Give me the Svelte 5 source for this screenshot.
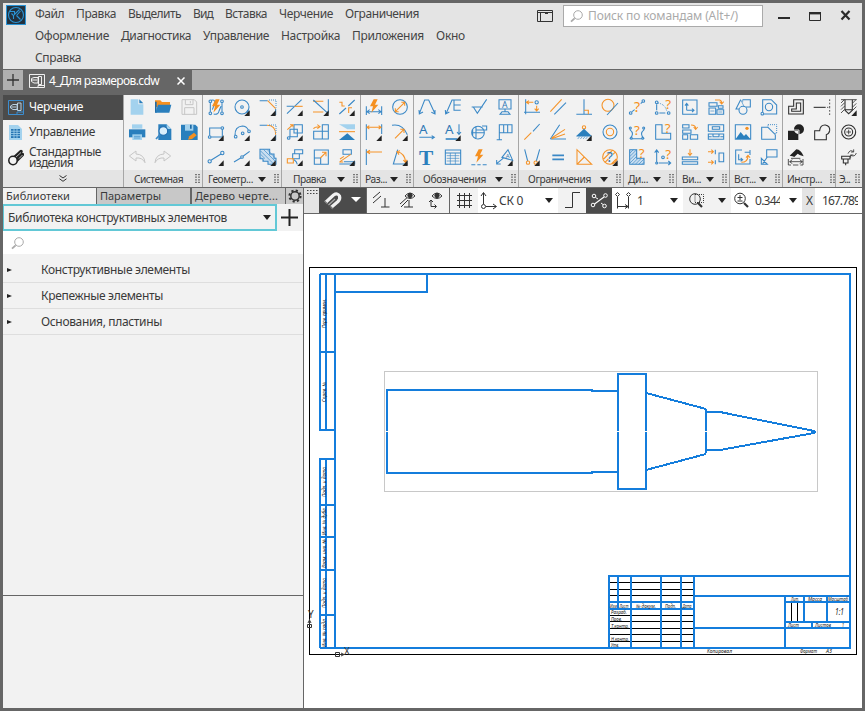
<script>
  // Stretches or tightens letter spacing so a label takes up the given width.
  function fit(node, width) {
    const natural = node.getBoundingClientRect().width;
    const count = node.textContent.length;
    if (width && count > 1) node.style.letterSpacing = (width - natural) / count + 'px';
  }

  const menu = [
    [['Файл', 29], ['Правка', 40], ['Выделить', 53], ['Вид', 20], ['Вставка', 42], ['Черчение', 54], ['Ограничения', 74]],
    [['Оформление', 74], ['Диагностика', 70], ['Управление', 66], ['Настройка', 59], ['Приложения', 72], ['Окно', 29]],
    [['Справка', 46]]
  ];

  // Icon notation: parts split by "|", each "class:path"; @x,y,r; is a circle,
  // "t class x y size char" is a letter, "^" is the corner flag.
  const bolt = 'fo:M38 13L27 34H36L31 53L52 29H42L50 13Z';
  const groups = [
    { name: 'Системная', w: 49, cols: 3, full: 78, pad: 10, icons: [
      'fl:M20 13H43V28H58V59H20Z|f:M46 13L58 25H46Z',
      'fo:M15 16H31L36 21H60V36H15Z|fd:M15 20H20V53H15Z|f:M16 53L24 29H64L58 53Z',
      'g:M18 14H55L62 21V58H18ZM28 14V29H51V14M26 58V38H54V58M43 18V25',
      'fl:M24 13H55V26H24Z|f:M15 28H64V52H15Z|fl:M25 43H54V60H25Z|b1:M30 49H49M30 54H49',
      'f:M25 13H50L64 27V60H25Z|fl:M50 13V27H64Z|w:@40,33,13;|b2:M31 43L18 57',
      'f:M15 14H58L65 21V60H15Z|fl:M27 14H52V32H27Z|fd:M42 14H47V26H42Z|fo:M36 59L40 49L54 38L62 46L48 57Z',
      'g:M36 18L16 33L36 48V39Q55 37 63 53Q61 28 36 27Z',
      'g:M42 18L62 33L42 48V39Q23 37 15 53Q17 28 42 27Z', ''] },
    { name: 'Геометр...', w: 45, cols: 3, full: 78, pad: 5, arrow: 1, icons: [
      'b:M22 23V50M25 16Q36 12 36 24L28 44M32 57Q46 60 48 48L54 34M57 24V50@22,19,4;@57,19,4;@22,55,4;@57,55,4;|' + bolt,
      'b:@39,36,21;|b:@39,36,4;|b:@57,50,3;|^',
      'b:M14 17H38M62 42V60|o:M38 17L62 41|d:M42 15H63V38|^',
      'b:M25 24H53M58 29V51H25M20 46V24H25@20,51,4;@58,24,4;|^',
      'b:M18 46Q17 20 40 18Q52 18 58 30@20,50,4;@41,40,4;@60,34,4;|^',
      'b:M14 16H36M62 44V60|o:M36 16Q62 16 62 44|d:M42 15H63V38|^',
      'b:M25 45L54 27@20,49,5;@58,24,5;|^',
      'b:M15 51L35 39M43 33L62 19@39,36,4;|^',
      'h:M15 13H44V27H57V40H63V58H39V49H24V41H15Z|b1:M17 18L56 57M17 28L30 41M26 14L62 50M37 14L60 38M25 46L27 48M17 37L20 40|^'] },
    { name: 'Правка', w: 33, cols: 3, full: 78, pad: 11, arrow: 1, icons: [
      'b:M15 56L59 14M14 34H35|o:M37 34H62|^',
      'o:M15 19H46M15 51H46|b:M16 15L60 55M61 13V55|^',
      'b:M16 57L36 39M43 33L62 15|o:M16 22H24V33L32 33M54 38H44V54|^',
      'b:M36 14H61V39H36ZM24 28H46V50H24Z@20,54,4;|o:M16 29L33 14M24 14H33V22|^',
      'b:M43 14H61V34H43ZM43 34H61V57H43ZM17 34H43V57H17Z|o:M17 27Q18 20 34 20M28 14L36 20L28 26',
      'fl:M15 13H63V28H40Z|o:M15 35H63|f:M15 60L40 40L63 60Z',
      'b:M38 14H62V26H38ZM32 26H52V41H32Z|o:M16 41H34V54H16Z|b:M36 44Q44 48 46 58|^',
      'b:M19 15H61V58H19ZM19 39H38V58|o:M37 39L53 23M42 22H54V34',
      'b:M27 14H52V28H27ZM16 57H62V50H30|o:M18 50L50 28M30 34L18 42M16 51H28|^'] },
    { name: 'Раз...', w: 22, cols: 2, full: 52, pad: 4, arrow: 1, icons: [
      'b:M16 34V60M62 34V60M18 50H60M26 44L18 50L26 56M52 44L60 50L52 56|' + bolt,
      'b:@39,36,22;|o:M25 50L53 22M25 40V50H35M43 22H53V32',
      'b:M16 13V60M62 13V42|o:M18 22H60M25 17L18 22L25 27M53 17L60 22L53 27|^',
      'b:M15 16Q46 10 61 44|o:M24 55L50 29M40 28H51V39|^',
      'b:M16 13V60|o:M18 21H63M27 16L18 21L27 26',
      'b:M32 14L19 57H62|o:M30 20Q54 24 56 52M39 17L30 20L36 29M49 45L56 53L60 44|^'] },
    { name: 'Обозначения', w: 63, cols: 4, full: 104, pad: 9, arrow: 1, icons: [
      'b:M16 56L32 15H44L63 56M15 45L16 57L27 51M52 52L63 57V45',
      'b:M18 56L36 15H63M42 15V46H62M42 30H62M16 45L17 57L28 51',
      'b:M17 36H50M22 36L34 55L62 13',
      'b:M21 14H57V42H21ZM39 42V50M24 58L30 50H48L54 58Z|t b 30 38 26 A',
      't b 15 43 40 A|b:M16 52H61M53 47L61 52L53 57',
      't b 15 43 40 A|b:M57 13V43M51 36L57 43L63 36|b2:M17 57H52|^',
      'b:@36,38,19;M16 38H55M30 20V57M30 30H62V18H48M20 28V48',
      'b:M22 60V14H60V38H22M35 14V38M47 14V38M14 59H30',
      't s 15 60 64 T',
      'b:M16 15H62V58H16ZM16 24H62|b1:M20 32H58M20 40H58M20 48H58M31 24V58M46 24V58',
      bolt + '|b:M16 59H28M34 59H44M50 59H62',
      'b:M14 56L36 38M14 45V57H26M30 37L48 14L62 46Z|t b 41 39 18 A|^'] },
    { name: 'Ограничения', w: 63, cols: 4, full: 104, pad: 9, arrow: 1, icons: [
      'b:M20 13V58M15 52H63@53,22,5;|o:M22 22H43M30 17L22 22L30 27M53 32V48M47 41L53 48L59 41',
      'o:M16 50L50 13|b:M28 58L63 23',
      'b:M39 13V58M16 58H63|o:M39 46H52V58',
      'o:@33,31,18;|b:M30 60L63 24',
      'o:M16 59L37 38|b:M42 34L62 12',
      'b:M16 57L44 14M16 57H63|o:M20 56L60 42M20 54L60 28',
      'o:@39,22,5;|f:M39 26L62 48H16Z|b1:M16 49H62M20 57L26 50M28 57L34 50M36 57L42 50M44 57L50 50|^',
      'b:@39,36,21;|o:@39,36,11;',
      'b:M17 13L26 48M62 13L52 48|o:@27,53,5;@50,53,5;|^',
      'b2:M22 31H57M22 43H57',
      'o:M18 14V58H62ZM18 58L40 36',
      'o:@39,36,22;M20 42L46 16M24 52L34 42M44 56L58 42M48 28L54 22|t b 29 51 42 ?|^'] },
    { name: 'Ди...', w: 20, cols: 2, full: 52, pad: 4, arrow: 1, icons: [
      'b:@20,54,4;@58,18,4;M24 50L32 44M50 26L54 22|t o 30 50 42 ?',
      'b:@20,22,4;@20,54,4;@56,54,4;|d:M24 24Q46 28 50 48|b:M20 28V46M28 54H46|t o 46 42 40 ?',
      'b:M17 28Q34 42 17 56M61 28Q44 42 61 56M22 56H56@19,24,3;@59,24,3;@22,55,3;@56,55,3;|t o 30 44 40 ?',
      'b:M17 14H36V40H62V58H17Z|t o 44 40 40 ?',
      'h:M17 14H38V40H60V58H17Z|b1:M18 24L28 14M18 34L38 14M18 44L38 24M18 54L38 34M24 58L42 40M34 58L52 40M44 58L60 42M54 58L60 52|t o 44 40 40 ?',
      'b:M20 50V16M14 23L20 15L26 23M26 54H62M55 48L62 54L55 60@39,37,4;@20,54,3;|t o 46 42 40 ?'] },
    { name: 'Ви...', w: 19, cols: 2, full: 52, pad: 5, arrow: 1, icons: [
      'b:M17 15H60V58H17ZM29 46V26M24 32L29 25L34 32M29 46H50M45 41L51 46L45 51',
      'b:M18 23H42V34H18ZM46 32H60V40H46ZM18 39H38V58H18ZM42 44H62V58H42Z|b1:M22 48H34M46 51H58|o:M36 15H50Q56 16 56 25M50 20L56 27L62 20',
      'b:M17 14H36V24H17ZM17 30H42V40H17ZM17 44H32V58H17ZM40 44H62V58H40Z|o:M42 15Q56 15 56 26M50 21L56 28L62 21',
      'b:M16 14H62V34H16ZM28 20H50V28H28ZM16 42H62V58H16ZM16 50H26M52 50H62M30 42V50H48V42',
      'o:M39 13V30M33 24L39 31L45 24|b:M16 36H62V44H16ZM16 50H62V58H16Z',
      'o:M15 20H31M25 14L31 20L25 26M15 52H31M25 46L31 52L25 58|b:M37 14V28M37 46V58M48 24H62V50H48Z'] },
    { name: 'Вст...', w: 22, cols: 2, full: 52, pad: 4, arrow: 1, icons: [
      'b:M38 14H61V36H46M32 14L18 42H28@39,46,12;|b1:M32 14L42 34M38 14V22',
      'b:M20 52V14H46L62 30V57H24@39,36,11;@19,56,4;',
      'b:M16 14H62V58H16Z|f:M17 57L32 36L42 48L48 42L61 57Z|fo:@51,25,5;',
      'b:M36 22H17V58H58V44M36 22L58 44|d:M36 14H62V40M36 14V22M58 40H62',
      'b:M36 15H17V57H60V42M26 28V44H38M44 22H60M60 15V30M32 39L38 44L32 49|o:M34 52Q54 52 54 32M48 38L54 31L60 38',
      'b:M32 14H63V36H32ZM34 36L20 56M16 40V58H34ZM16 40L34 58'] },
    { name: 'Инстр...', w: 35, cols: 2, full: 52, pad: 4, icons: [
      'k:M32 14H61V57H17V34H32ZM40 24H53V49H26V42H40Z',
      'k:M14 37H50|k1:M54 37H58M62 13V18M62 23V28M62 33V40M62 45V50M62 55V60',
      'fk:@48,28,15;M15 32H46V60H15Z|w1:M33 30H48V44',
      'k:M17 32H32Q34 14 49 15Q64 18 62 32Q60 42 52 44V59H17Z',
      'fk:M20 32L40 13Q54 14 62 34L50 30L44 26L34 36L28 34Z|k1:M16 42V60H24M60 42V60H52M30 60H46M20 50H58M28 44L20 50L28 56M50 44L58 50L50 56M24 40H52', ''] },
    { name: 'Э...', w: 11, cols: 1, full: 26, pad: 3, icons: [
      'k:M27 14V46L38 56L49 46V14M27 44H49|k1:M15 14H62M15 24L25 14M15 34L26 23M15 44L26 33M15 54L26 43M50 24L60 14M50 36L61 25M50 46L61 35|^',
      'k:@38,36,21;@38,36,12;|k1:M31 36H45M38 29V43',
      'k:M17 34H42V42H17ZM22 42V54H36V42M29 54V61|k1:M36 26Q42 12 52 20M45 21H53V13M61 24Q56 38 44 30M44 38V30H52'] }
  ];

  const parse = (src) => src.split('|').filter(Boolean).map((part) => {
    if (part === '^') return { cls: 'flag', d: 'M62 46V63H46Z' };
    if (part.startsWith('t ')) {
      const [, cls, x, y, size, ch] = part.split(' ');
      return { text: ch, cls, x, y, size };
    }
    const i = part.indexOf(':');
    const d = part.slice(i + 1).replace(/@(\d+),(\d+),(\d+);/g, (_, x, y, r) =>
      `M${+x - +r} ${y}a${r} ${r} 0 1 0 ${2 * r} 0a${r} ${r} 0 1 0 ${-2 * r} 0`);
    return { cls: part.slice(0, i), d };
  });

  const tree = [['Конструктивные элементы', 149], ['Крепежные элементы', 122], ['Основания, пластины', 121]];
  // Title block labels: x, baseline, text, width.
  const stamp = [
    [610, 608, 'Изм', 7], [619.5, 608, 'Лист', 9], [636, 608, '№ докум.', 20], [665, 608, 'Подп.', 11], [682.5, 608, 'Дата', 9],
    [611, 614, 'Разраб.', 16], [611, 621, 'Пров.', 11], [611, 627.5, 'Т.контр.', 18], [611, 640.5, 'Н.контр.', 18], [611, 647, 'Утв.', 8],
    [791, 601, 'Лит.', 8], [808, 601, 'Масса', 14], [828, 601, 'Масштаб', 20], [788, 627, 'Лист', 11], [815, 627, 'Листов', 16], [842, 627, '1', 2],
    [707, 653, 'Копировал', 25], [800, 653, 'Формат', 17], [826, 653, 'А3', 6]
  ];
  const side = [[328, 'Перв. примен.', 29], [402, 'Справ. №', 20], [497, 'Подп. и дата', 30], [535, 'Инв. № дубл.', 28], [568, 'Взам. инв. №', 29], [608, 'Подп. и дата', 30], [647, 'Инв. № подл.', 29]];
</script>

{#snippet sprite(src)}
  <svg class="ic" viewBox="0 0 78 75">
    {#each parse(src) as p}
      {#if p.text}
        <text class={'t' + p.cls} x={p.x} y={p.y} font-size={p.size}>{p.text}</text>
      {:else}
        <path class={p.cls} d={p.d} />
      {/if}
    {/each}
  </svg>
{/snippet}

{#snippet lens(cls)}
  <svg class={cls} width="14" height="14" viewBox="0 0 14 14"><path d="M4.6 9.3L1 12.7" stroke-width="1.8" /><circle cx="8" cy="6" r="4.3" /></svg>
{/snippet}

<div class="app">
  <header>
    <svg class="logo" width="20" height="20" viewBox="0 0 20 20"><rect width="20" height="20" fill="#22303c" /><rect x=".5" y=".5" width="19" height="19" class="ln" /><circle cx="10" cy="10" r="7.5" class="ln" /><path class="ln" d="M4 6.500H8.500V9.500L13.500 4.500M7.500 14V10.500L5.500 8.500M10.500 10.500L14.500 14.500M14.500 6L10.500 10.500" /></svg>
    <nav>
      {#each menu as row}
        <div class="mrow">{#each row as [label, w]}<span class="mi" style:width="{w}px"><span use:fit={w}>{label}</span></span>{/each}</div>
      {/each}
    </nav>
    <div class="wintools">
      <svg width="16" height="12" viewBox="0 0 16 12" fill="none" stroke="#333"><path d="M.5 .5H15.5V11.5H.5ZM.5 2.5H15.5M3.5 2.5V11.5M8 3.5H11" /></svg>
      <div class="search">{@render lens('lens')}<span use:fit={150}>Поиск по командам (Alt+/)</span></div>
      <svg class="wb" width="76" height="14" viewBox="0 0 76 14" fill="none" stroke="#2b2b2b"><path d="M0 9H12" stroke-width="2" /><path d="M31.500 4V11.500H42.500V4" /><path d="M31 4.200H43" stroke-width="2.400" /><path d="M63.500 2L71.500 10.500M71.500 2L63.500 10.500" stroke-width="2.200" /></svg>
    </div>
  </header>

  <div class="doctabs">
    <div class="plus"><svg width="12" height="12" viewBox="0 0 12 12"><path d="M6 0V12M0 6H12" stroke="#333" stroke-width="1.3" /></svg></div>
    <div class="doc">
      <svg width="16" height="14" viewBox="0 0 16 14" fill="none" stroke="#fff"><path d="M.5 .5H15.500V13.500H.5ZM2.500 4.500L5 3.500H9V9H5L2.500 7.500ZM9.500 2.500H12.500V10.500H9.500ZM9 13V11.500H15M2 6H8" stroke-width=".9" /></svg>
      <span class="dt"><span use:fit={110}>4_Для размеров.cdw</span></span>
      <svg width="8" height="8" viewBox="0 0 8 8"><path d="M.5 .5L7.500 7.500M7.500 .5L.5 7.500" stroke="#fff" stroke-width="1.5" /></svg>
    </div>
  </div>

  <section class="ribbon">
    <div class="modes">
      <div class="mode on"><svg width="16" height="15" viewBox="0 0 16 15" fill="none" stroke="#3b8dd0"><path d="M.5 .5H15.500V14.500H.5ZM9 14V12H15" /><path d="M2.500 6L5 4.500H9V9.500H5L2.500 8ZM9.500 3H13V10.500H9.500ZM2 7H8" stroke="#b9cfe0" /></svg><span use:fit={54}>Черчение</span></div>
      <div class="mode"><svg width="16" height="15" viewBox="0 0 16 15"><path d="M1 0H10L14 4V15H1Z" fill="#a3d2ee" /><path d="M3 4H12V13H3Z" fill="#2676b4" /><path d="M3 6.200H12M3 8.500H12M3 10.700H12M6 4V13M9 4V13" stroke="#a3d2ee" stroke-width=".8" /></svg><span use:fit={66}>Управление</span></div>
      <div class="mode"><svg width="16" height="17" viewBox="0 0 16 17"><path d="M7 8L13 2.500M9 11L14.500 5.500" stroke="#222" stroke-width="3.400" stroke-linecap="round" /><path d="M8 8L13 3.500M11 9.500L14.500 6" stroke="#bbb" stroke-width="1" /><circle cx="5" cy="11.500" r="4.200" fill="#f4f4f4" stroke="#222" stroke-width="1.500" /></svg><span class="two"><span use:fit={72}>Стандартные</span><span use:fit={44}>изделия</span></span></div>
      <div class="more"><svg width="8" height="7" viewBox="0 0 8 7" fill="none" stroke="#333"><path d="M.5 .5L4 3L7.500 .5M.5 3.800L4 6.300L7.500 3.800" /></svg></div>
    </div>
    {#each groups as g}
      <div class="group" style:width="{g.full}px">
        <div class="cells">{#each g.icons as icon}{@render sprite(icon)}{/each}</div>
        <div class="cap" style:padding-left="{g.pad}px">
          <span use:fit={g.w}>{g.name}</span>
          <i class="sp"></i>
          {#if g.arrow}<b class="tri"></b>{/if}
          <svg class="grip" class:tight={g.cols === 1} width="5" height="9" viewBox="0 0 5 9"><path d="M1 0V9M4 0V9" stroke="#333" stroke-width="1.200" stroke-dasharray="1.200 1.400" /></svg>
        </div>
      </div>
    {/each}
  </section>

  <main>
    <aside>
      <div class="ptabs">
        <div class="pt on"><span use:fit={64}>Библиотеки</span></div>
        <div class="pt"><span use:fit={61}>Параметры</span></div>
        <div class="pt"><span use:fit={83}>Дерево черте...</span></div>
        <div class="gear"><svg width="14" height="14" viewBox="0 0 14 14" fill="none" stroke="#333"><circle cx="7" cy="7" r="4.200" stroke-width="1.500" /><circle cx="7" cy="7" r="5.600" stroke-width="2" stroke-dasharray="2.200 2.200" /></svg></div>
      </div>
      <div class="lib">
        <div class="combo"><span use:fit={219}>Библиотека конструктивных элементов</span><b class="tri"></b></div>
        <svg width="17" height="17" viewBox="0 0 17 17"><path d="M8.500 0V17M0 8.500H17" stroke="#222" stroke-width="2" /></svg>
      </div>
      <div class="find">{@render lens('lens')}</div>
      <div class="tree">
        {#each tree as [label, w]}
          <div class="node"><b></b><span use:fit={w}>{label}</span></div>
        {/each}
      </div>
      <div class="low"></div>
    </aside>

    <section class="view">
      <div class="bar">
        <div class="c gr" style:width="15px"><svg width="11" height="6" viewBox="0 0 11 6"><path d="M0 1.500H11M0 4.500H11" stroke="#444" stroke-dasharray="1.500 1.500" /></svg></div>
        <div class="c dk" style:width="47px"><svg width="47" height="25" viewBox="0 0 47 25" fill="none"><path d="M6.500 14.500L14.500 7Q18.500 4.500 20.500 8Q21.500 11 19 13.500L12 19.500" stroke="#f2f2f2" stroke-width="3.200" /><path d="M9.500 17L16 11" stroke="#aaa" stroke-width="1.200" /><path d="M5.500 13L8.500 16M11 18L14 21" stroke="#777" stroke-width="1.200" /><path d="M32 9H42L37 14Z" fill="#fff" /></svg></div>
        <div class="c edge" style:width="84px"><svg width="82" height="25" viewBox="0 0 82 25" class="line"><path d="M6 10L13 4M6 15L14 8M18 10V19M14 19H22.500" /><path d="M33 16L43 7M34 19L41 12M42 12V19M37 19H46" /><path d="M38 8Q43 2 48 8Q43 13 38 8Z" fill="#fff" /><circle cx="43" cy="7.500" r="2.200" fill="#333" /><path d="M65 8Q70 2 75 8Q70 13 65 8Z" fill="#fff" /><circle cx="70" cy="7.500" r="2.200" fill="#333" /><path d="M64 12V18.500H69M62 14L64 12L66 14M67.500 16.500L69.500 18.500L67.500 20.500" /></svg></div>
        <div class="c" style:width="28px"><svg width="28" height="25" viewBox="0 0 28 25" class="line"><path d="M9.500 5V20M14.500 5V20M19.500 5V20M7 7.500H22M7 12.500H22M7 17.500H22" /></svg></div>
        <div class="c wh" style:width="80px"><svg width="21" height="25" viewBox="0 0 21 25" class="line"><path d="M5.500 16V5M3 8L5.500 4.500L8 8M8 18.500H18M15 16L18.500 18.500L15 21" /><circle cx="5.500" cy="18.500" r="2" /></svg><span use:fit={24}>СК 0</span><i class="sp"></i><b class="tri"></b></div>
        <div class="c" style:width="28px"><svg width="28" height="25" viewBox="0 0 28 25" class="line"><path d="M7 19.500H14.500V4.500H22" /></svg></div>
        <div class="c dk" style:width="26px"><svg width="26" height="25" viewBox="0 0 26 25" fill="none" stroke="#fff"><path d="M8.500 16L18 9" stroke-width="1.200" /><path d="M9.500 9.500L12 11M15 15L17 16.500" /><circle cx="8" cy="8" r="1.800" /><circle cx="19.500" cy="7.500" r="1.800" /><circle cx="7" cy="17" r="1.800" /><circle cx="18.500" cy="18" r="1.800" /></svg></div>
        <div class="c wh" style:width="71px"><svg width="25" height="25" viewBox="0 0 25 25" class="line"><path d="M5.500 9V20.500M16.500 9V20.500M6 18.500H16M13 16.500L16 18.500L13 20.500" /><path d="M5.500 4.500L7.500 6.500L5.500 8.500L3.500 6.500ZM16.500 4.500L18.500 6.500L16.500 8.500L14.500 6.500Z" /></svg><span>1</span><i class="sp"></i><b class="tri"></b></div>
        <div class="c" style:width="48px"><svg width="26" height="25" viewBox="0 0 26 25" class="line"><circle cx="12" cy="11" r="5.300" /><path d="M15 15L19 19" stroke-width="2.200" /><path d="M12 6.500H20.500V14.500H12Z" stroke-dasharray="1 1" /></svg><i class="sp"></i><b class="tri"></b></div>
        <div class="c wh" style:width="71px"><svg width="24" height="25" viewBox="0 0 24 25" class="line"><circle cx="9" cy="10.500" r="5.300" /><path d="M13 15L17 19" stroke-width="2.200" /><path d="M6.500 9.500H11.500M9 7V12M6.500 13H11.500" /></svg><span class="clip" style:width="25px"><span use:fit={27}>0.344</span></span><i class="sp"></i><b class="tri"></b></div>
        <div class="c gr x" style:width="13px">X</div>
        <div class="c wh" style:width="46px"><span class="clip last" style:width="36px"><span use:fit={38}>167.789</span></span></div>
      </div>

      <svg class="sheet" width="558" height="494" viewBox="304 214 558 494">
        <g class="thin"><rect x="309.500" y="267.500" width="547" height="387" /><rect x="384.500" y="371.500" width="433" height="120" stroke="#c8c8c8" />
          <path d="M609 582.500H694M609 589.500H694M609 595.500H694M609 615.500H694M609 621.500H694M609 628.500H694M609 634.500H694M609 641.500H694M791.500 602V622M797.500 602V622" />
        </g>
        <path class="blue" d="M320 274H850V648H320M335 274V648M320 274V430H335M326 274V430M320 352H335M320 648V459H335M326 459V648M320 505H335M320 537H335M320 570H335M320 615H335M335 292H427V274" />
        <path class="blue" d="M609 648V576H850M618 576V609M631 576V648M661 576V648M681 576V648M694 576V648M609 602H694M609 609H694M694 596H850M694 628H850M785 596V648M804 596V622M827 596V622M785 602H850M785 622H850M812 622V628" />
        <path class="blue" d="M618 391H592V390H387V473H592V472H618M618 374H646V489H618ZM706 409V453" />
        <path class="blue" d="M646 393L706 409M646 470L706 454M706 412H720L814 431Q817 432 814 433L720 450H706" />
        <path d="M386 431.500H388M617 431.500H619M645 431.500H647M705 431.500H707" stroke="#fff" />
        <g class="gost">
          {#each stamp as [x, y, s, w]}<text {x} {y} textLength={w} lengthAdjust="spacingAndGlyphs">{s}</text>{/each}
          {#each side as [y, s, w]}<text transform="translate(325.500 {y}) rotate(-90)" textLength={w} lengthAdjust="spacingAndGlyphs">{s}</text>{/each}
          <text x="835" y="615" font-size="8" textLength="9" lengthAdjust="spacingAndGlyphs">1:1</text>
        </g>
        <g class="axis"><text x="308" y="618">Y</text><text x="344" y="654.500">X</text><path d="M309.500 619V625M307.500 624.500H311.500V627.500H307.500ZM308 623L309.500 620L311 623M335.500 652.500V656.500H339.500V652.500ZM339 654.500H345M341 653L344 654.500L341 656" /></g>
      </svg>
    </section>
  </main>
</div>

<style>
  :global(body) { margin: 0; }
  .app { box-sizing: border-box; width: 865px; height: 711px; border: 3px solid #666; background: #666; font: 12px/16px "Noto Sans", "Open Sans", sans-serif; color: #3a3a3a; overflow: hidden; display: flex; flex-direction: column; }
  .app :global(span) { white-space: pre; }
  svg { display: block; flex: none; }
  .sp { flex: 1; }
  .ln { fill: none; stroke: #2a93d5; stroke-width: 1.1; }
  header { box-sizing: border-box; height: 67px; background: #e4e4e4; display: flex; flex: none; position: relative; border-bottom: 1px solid #666; }
  .logo { margin: 2px 0 0 3px; }
  nav { margin-left: 9px; flex: 1; }
  .mrow { display: flex; gap: 12px; height: 22px; align-items: center; color: #444; }
  .mi { display: block; }
  .mi > span { display: inline-block; }
  .wintools { position: absolute; top: 2px; left: 534px; display: flex; align-items: center; height: 22px; }
  .search { box-sizing: border-box; width: 200px; height: 22px; border: 1px solid #aaa; background: #fff; margin-left: 10px; display: flex; align-items: center; gap: 4px; padding-left: 6px; color: #aaa; }
  .lens { fill: none; stroke: #aaa; }
  .wb { margin-left: 15px; }
  .doctabs { height: 20px; background: #b0b0b0; display: flex; flex: none; margin-bottom: 5px; }
  .plus { width: 20px; display: flex; align-items: center; justify-content: center; background: #b0b0b0; }
  .doc { width: 169px; background: #666; display: flex; align-items: center; color: #fff; padding-left: 6px; box-sizing: border-box; height: 22px; }
  .dt { width: 128px; margin-left: 4px; }
  .dt > span { display: inline-block; }
  .ribbon { display: flex; height: 92px; flex: none; background: #a6a6a6; gap: 1px; }
  .modes { width: 120px; background: #f2f2f2; }
  .mode { box-sizing: border-box; height: 25px; display: flex; align-items: center; gap: 5px; padding: 0 0 1px 5px; }
  .mode.on { background: #4b4b4b; color: #fff; }
  .two { line-height: 11px; display: flex; flex-direction: column; align-items: flex-start; }
  .more { height: 17px; background: #e4e4e4; display: flex; align-items: center; justify-content: center; }
  .group { flex: none; background: #f2f2f2; }
  .cells { display: flex; flex-wrap: wrap; height: 75px; }
  .ic { width: 26px; height: 25px; overflow: visible; }
  .cap { height: 17px; background: #e4e4e4; display: flex; align-items: center; box-sizing: border-box; padding-right: 2px; padding-top: 1px; font-size: 10.200px; }
  .grip { margin: -2px 0 0 8px; }
  .grip.tight { margin-left: 2px; }
  .tri { border: 4.500px solid transparent; border-top: 5px solid #222; border-bottom: 0; width: 0; height: 0; flex: none; }
  .b, .b1, .b2, .o, .g, .d, .k, .k1, .h, .w, .w1 { fill: none; stroke: #3a88c6; stroke-width: 3.200; }
  .b1 { stroke-width: 2; }
  .b2 { stroke-width: 5; }
  .o { stroke: #f59328; }
  .g { stroke: #c6c6c6; stroke-width: 3; }
  .d { stroke-width: 2.800; stroke-dasharray: 3 3; }
  .k, .k1 { stroke: #2d2d2d; }
  .k1 { stroke-width: 2.400; }
  .h { fill: #c9def0; }
  .w { fill: #d9eefb; stroke: #1f6cae; }
  .w1 { stroke: #f2f2f2; stroke-width: 2.500; }
  .f { fill: #2a7fbd; }
  .fd { fill: #1f6aa5; }
  .fl { fill: #a3d2ee; }
  .fo { fill: #f59020; }
  .fk, .flag { fill: #222; }
  .tb { fill: #2f78b5; }
  .to { fill: #f59020; }
  .ts { fill: #2a7fbd; font-family: "Liberation Serif", serif; font-weight: bold; }
  main { display: flex; flex: 1; border-top: 1px solid #666; min-height: 0; }
  aside { width: 300px; flex: none; background: #f2f2f2; display: flex; flex-direction: column; }
  .ptabs { height: 16px; display: flex; background: #666; gap: 1px; line-height: 15px; font-size: 11px; flex: none; }
  .pt { width: 90px; background: #c8c8c8; padding-left: 3px; }
  .pt.on { background: #f2f2f2; }
  .pt + .pt + .pt { margin-left: 1px; }
  .gear { flex: 1; background: #c8c8c8; display: flex; align-items: center; justify-content: center; }
  .lib { height: 27px; display: flex; align-items: center; gap: 4px; flex: none; }
  .combo { box-sizing: border-box; width: 275px; height: 27px; margin-left: -1px; border: 2px solid #62c8d6; display: flex; align-items: center; justify-content: space-between; padding: 0 4px; }
  .find { height: 23px; background: #fff; display: flex; align-items: center; padding-left: 8px; flex: none; }
  .tree { margin-top: 3px; flex: 1; }
  .node { box-sizing: border-box; height: 26px; border-bottom: 1px solid #dedede; display: flex; align-items: center; }
  .node b { border: 2.500px solid transparent; border-left: 5px solid #222; border-right: 0; margin: 1px 29px 0 4px; }
  .low { height: 112px; border-top: 1px solid #666; }
  .view { width: 558px; border-left: 1px solid #666; background: #fff; flex: none; }
  .bar { height: 25px; display: flex; border-bottom: 1px solid #666; }
  .c { flex: none; box-sizing: border-box; background: #f2f2f2; display: flex; align-items: center; overflow: hidden; }
  .c .tri { margin-right: 5px; }
  .gr { background: #e4e4e4; align-items: flex-start; padding: 1px 0 0 3px; }
  .x { align-items: center; padding: 0 0 0 4px; }
  .dk { background: #4b4b4b; }
  .wh { background: #fff; }
  .edge { border: 1px solid #666; border-width: 0 1px; }
  .clip { overflow: hidden; }
  .clip > span { display: inline-block; }
  .last { margin-left: 7px; }
  .line { fill: none; stroke: #333; }
  .sheet text { font-family: "Noto Sans", sans-serif; }
  .thin { fill: none; stroke: #000; shape-rendering: crispEdges; }
  .blue { fill: none; stroke: #147ddc; stroke-width: 2; shape-rendering: crispEdges; }
  .gost { font-size: 5px; font-style: italic; fill: #111; }
  .axis { font-size: 10px; fill: #333; stroke: none; }
  .axis path { fill: none; stroke: #333; }
</style>
